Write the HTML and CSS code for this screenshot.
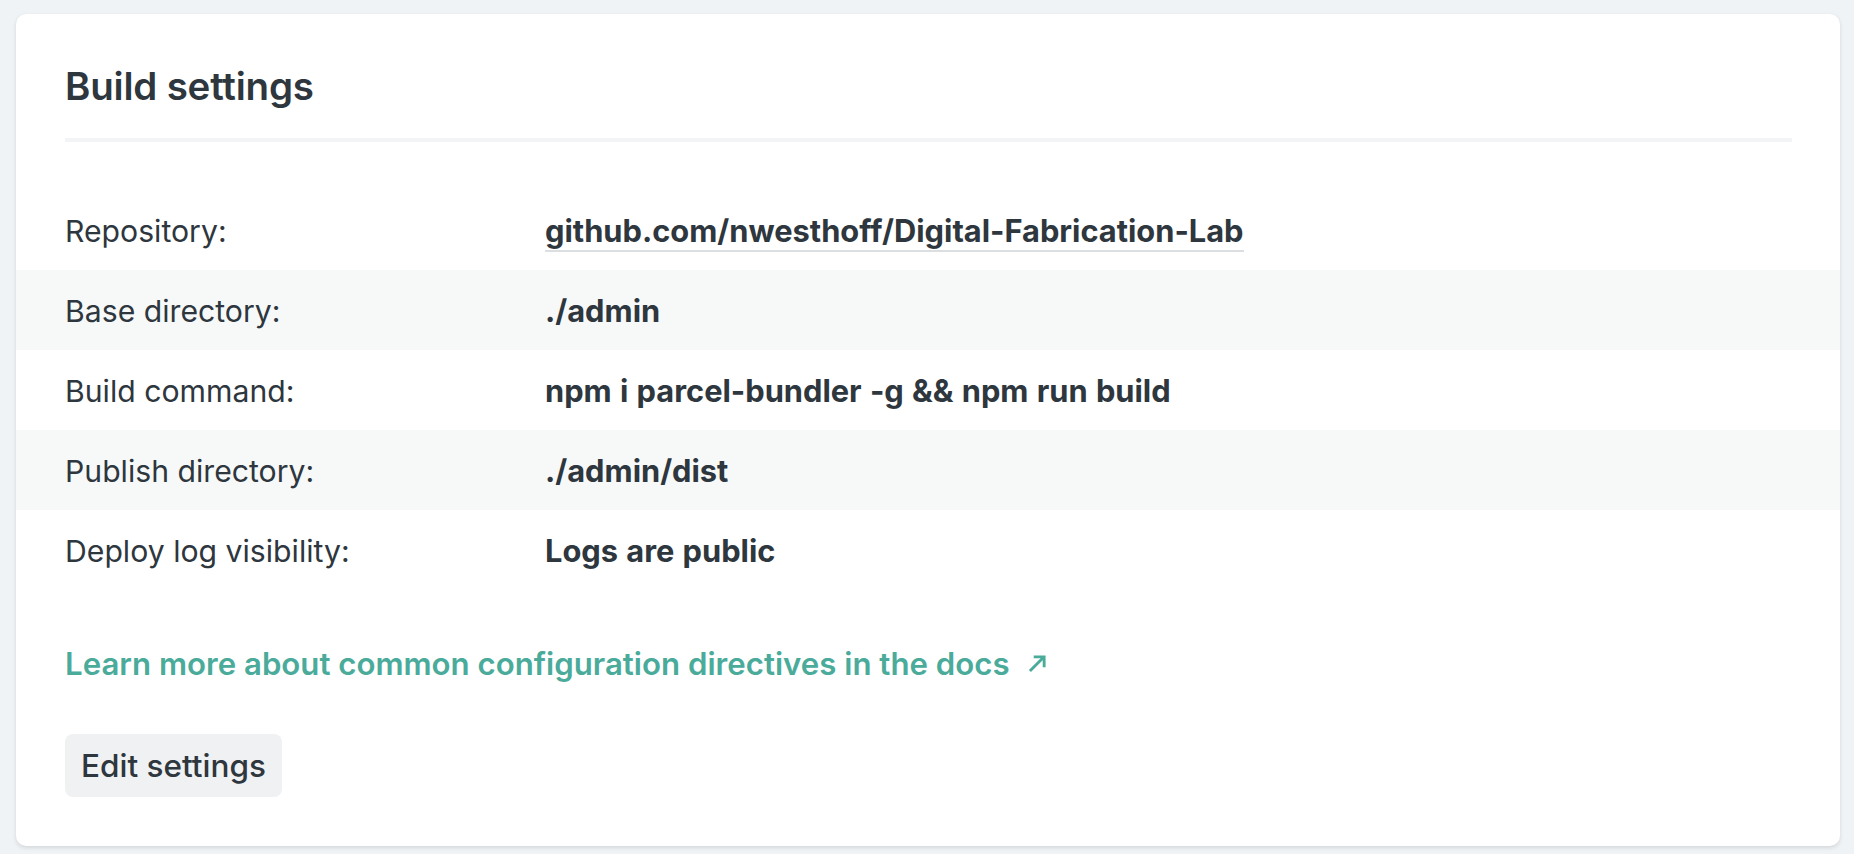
FILE: index.html
```html
<!DOCTYPE html>
<html lang="en">
<head>
<meta charset="utf-8">
<title>Build settings</title>
<link rel="stylesheet" href="styles.css">
</head>
<body>
<main class="page">
  <section class="card">
    <h2 class="card-title">Build settings</h2>
    <hr class="divider">
    <dl class="settings">
      <div class="row">
        <dt class="label">Repository:</dt>
        <dd class="value"><a class="repo-link" href="#">github.com/nwesthoff/Digital-Fabrication-Lab</a></dd>
      </div>
      <div class="row striped">
        <dt class="label">Base directory:</dt>
        <dd class="value">./admin</dd>
      </div>
      <div class="row">
        <dt class="label">Build command:</dt>
        <dd class="value">npm i parcel-bundler -g &amp;&amp; npm run build</dd>
      </div>
      <div class="row striped">
        <dt class="label">Publish directory:</dt>
        <dd class="value">./admin/dist</dd>
      </div>
      <div class="row">
        <dt class="label">Deploy log visibility:</dt>
        <dd class="value">Logs are public</dd>
      </div>
    </dl>
    <p class="docs">
      <a class="docs-link" href="#">Learn more about common configuration directives in the docs
        <svg class="ext-icon" viewBox="0 0 20 20" width="20" height="20" aria-hidden="true"><path d="M2 18 L17 3 M6 3 H17 V14" fill="none" stroke="currentColor" stroke-width="3" stroke-linecap="butt" stroke-linejoin="miter"/></svg>
      </a>
    </p>
    <button class="btn" type="button">Edit settings</button>
  </section>
</main>
</body>
</html>
```

FILE: styles.css
```css
* { box-sizing: border-box; }

html, body {
  margin: 0;
  padding: 0;
  background: #f0f3f6;
}

body {
  font-family: Inter, "Noto Sans", "Liberation Sans", sans-serif;
  color: #2e363e;
}

.page {
  padding: 14px 14px 0 16px;
  height: 854px;
}

.card {
  background: #ffffff;
  border-radius: 10px;
  box-shadow: 0 2px 4px rgba(14, 30, 37, 0.12), 0 0 1px rgba(14, 30, 37, 0.06);
  height: 832px;
  padding: 49px 48px 49px 49px;
  display: flex;
  flex-direction: column;
}

.card-title {
  margin: 0;
  font-size: 38.5px;
  line-height: 46px;
  font-weight: 600;
  letter-spacing: -0.2px;
}

.divider {
  border: 0;
  height: 4px;
  background: #f2f4f6;
  margin: 29px 0 48px;
}

.settings {
  margin: 0;
}

.row {
  display: grid;
  grid-template-columns: 480px 1fr;
  align-items: center;
  height: 80px;
  margin: 0 -48px 0 -49px;
  padding: 2px 48px 0 49px;
}

.row.striped {
  background: #f7f9f9;
}

.label, .value {
  margin: 0;
  line-height: 36px;
}

.label {
  font-size: 30.2px;
  font-weight: 400;
}

.value {
  font-size: 30.8px;
  font-weight: 700;
  word-spacing: 1px;
}

.repo-link {
  color: inherit;
  text-decoration: none;
  border-bottom: 2px solid #dcdfe2;
  padding-bottom: 1px;
}

.docs {
  margin: 56px 0 0;
  font-size: 31.2px;
  line-height: 36px;
}

.docs-link {
  color: #4aab9b;
  font-weight: 600;
  text-decoration: none;
  display: inline-flex;
  align-items: center;
  gap: 18px;
}

.ext-icon {
  width: 19px;
  height: 19px;
  margin-top: -2px;
}

.btn {
  align-self: flex-start;
  margin-top: 52px;
  height: 63px;
  padding: 0 16px;
  border: 0;
  border-radius: 8px;
  background: #eff1f3;
  color: #2e363e;
  font-family: inherit;
  font-size: 31.5px;
  font-weight: 500;
}
```
